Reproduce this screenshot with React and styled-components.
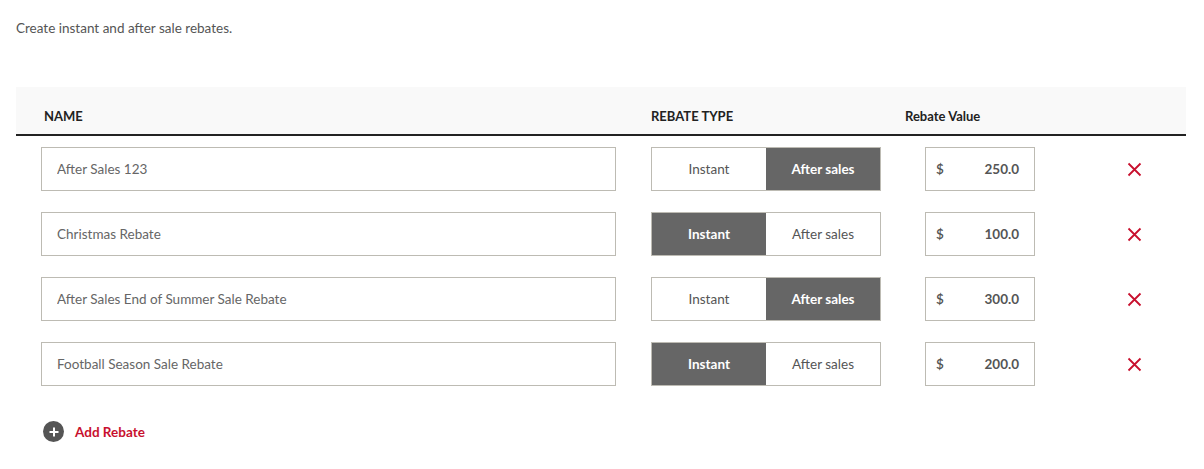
import React, { useState } from "react";
import styled, { createGlobalStyle, css } from "styled-components";

const GlobalStyle = createGlobalStyle`
  body {
    margin: 0;
    background: #fff;
    font-family: Lato, "Open Sans", sans-serif;
  }
`;

const initialRebates = [
  { id: 1, name: "After Sales 123", type: "after", value: "250.0" },
  { id: 2, name: "Christmas Rebate", type: "instant", value: "100.0" },
  { id: 3, name: "After Sales End of Summer Sale Rebate", type: "after", value: "300.0" },
  { id: 4, name: "Football Season Sale Rebate", type: "instant", value: "200.0" },
];

const App = () => {
  const [rebates, setRebates] = useState(initialRebates);

  const setType = (id, type) =>
    setRebates((list) => list.map((r) => (r.id === id ? { ...r, type } : r)));
  const remove = (id) => setRebates((list) => list.filter((r) => r.id !== id));

  return (
    <Page>
      <GlobalStyle />
      <Intro>Create instant and after sale rebates.</Intro>
      <Table>
        <HeaderRow>
          <HeadLabel shift={3}>NAME</HeadLabel>
          <HeadLabel>REBATE TYPE</HeadLabel>
          <HeadLabel shift={-20}>Rebate Value</HeadLabel>
          <span />
        </HeaderRow>
        <Body>
          {rebates.map((r) => (
            <Row key={r.id}>
              <NameInput defaultValue={r.name} />
              <Toggle>
                <ToggleButton active={r.type === "instant"} onClick={() => setType(r.id, "instant")}>
                  Instant
                </ToggleButton>
                <ToggleButton active={r.type === "after"} onClick={() => setType(r.id, "after")}>
                  After sales
                </ToggleButton>
              </Toggle>
              <ValueBox>
                <Currency>$</Currency>
                <Amount>{r.value}</Amount>
              </ValueBox>
              <RemoveButton onClick={() => remove(r.id)} aria-label="Remove">
                <svg width="15" height="15" viewBox="0 0 15 15">
                  <path d="M1.5 1.5 L13.5 13.5 M13.5 1.5 L1.5 13.5" stroke="#c8102e" strokeWidth="1.8" fill="none" />
                </svg>
              </RemoveButton>
            </Row>
          ))}
        </Body>
      </Table>
      <AddButton>
        <PlusCircle>
          <svg width="10" height="10" viewBox="0 0 10 10">
            <path d="M5 0.5 V9.5 M0.5 5 H9.5" stroke="#fff" strokeWidth="2" fill="none" />
          </svg>
        </PlusCircle>
        Add Rebate
      </AddButton>
    </Page>
  );
};

export default App;

const Page = styled.div`
  padding: 20px 18px 20px 16px;
`;

const Intro = styled.p`
  margin: 0;
  font-size: 13.5px;
  line-height: 16px;
  color: #555;
`;

const Table = styled.div`
  margin-top: 51px;
`;

const columns = css`
  display: grid;
  grid-template-columns: 610px 274px 189px 40px;
  padding-left: 25px;
  align-items: center;
`;

const HeaderRow = styled.div`
  ${columns}
  background: #f9f9f9;
  padding-top: 22px;
  padding-bottom: 11px;
  border-bottom: 2px solid #222;
`;

const HeadLabel = styled.span`
  font-size: 13px;
  line-height: 14px;
  font-weight: 700;
  color: #222;
  margin-left: ${({ shift }) => shift || 0}px;
`;

const Body = styled.div`
  display: flex;
  flex-direction: column;
  gap: 21px;
  padding-top: 11px;
`;

const Row = styled.div`
  ${columns}
`;

const NameInput = styled.input`
  box-sizing: border-box;
  width: 575px;
  height: 44px;
  border: 1px solid #bdbbb3;
  padding: 0 15px;
  font-family: inherit;
  font-size: 13.5px;
  color: #666;
  outline: none;
`;

const Toggle = styled.div`
  display: flex;
  box-sizing: border-box;
  width: 230px;
  height: 44px;
  border: 1px solid #bdbbb3;
`;

const ToggleButton = styled.button`
  flex: 1;
  border: none;
  font-family: inherit;
  font-size: 13.5px;
  cursor: pointer;
  ${({ active }) =>
    active
      ? css`
          background: #666;
          color: #fff;
          font-weight: 700;
        `
      : css`
          background: #fff;
          color: #555;
          font-weight: 400;
        `}
`;

const ValueBox = styled.div`
  display: flex;
  align-items: center;
  justify-content: space-between;
  box-sizing: border-box;
  width: 110px;
  height: 44px;
  border: 1px solid #bdbbb3;
  padding: 0 15px 0 10px;
  font-size: 13.5px;
  color: #555;
`;

const Currency = styled.span`
  font-weight: 600;
`;

const Amount = styled.span`
  font-weight: 700;
`;

const RemoveButton = styled.button`
  display: flex;
  justify-content: center;
  align-items: center;
  width: 40px;
  height: 30px;
  padding: 0;
  border: none;
  background: none;
  cursor: pointer;
`;

const AddButton = styled.button`
  display: flex;
  align-items: center;
  gap: 11px;
  margin: 35px 0 0 27px;
  padding: 0;
  border: none;
  background: none;
  font-family: inherit;
  font-size: 13.5px;
  font-weight: 700;
  color: #c8102e;
  cursor: pointer;
`;

const PlusCircle = styled.span`
  display: flex;
  justify-content: center;
  align-items: center;
  width: 21px;
  height: 21px;
  border-radius: 50%;
  background: #555;
`;
